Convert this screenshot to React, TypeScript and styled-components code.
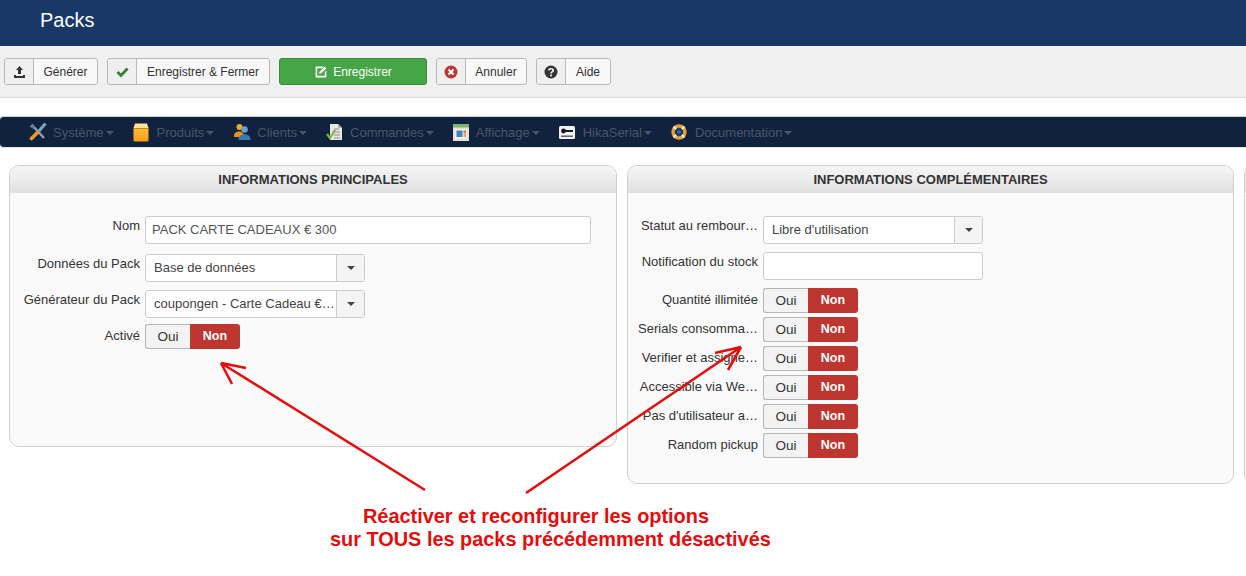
import React from 'react';
import styled, { createGlobalStyle } from 'styled-components';

const GlobalStyle = createGlobalStyle`
  html, body {
    margin: 0;
    padding: 0;
    background: #fff;
    font-family: "Liberation Sans", Arial, sans-serif;
    overflow: hidden;
  }
`;

const UploadIcon = () => (
  <svg width="13" height="13" viewBox="0 0 13 13">
    <path d="M6.5 1 L10 5 H8 V9 H5 V5 H3 Z M1 10 H3 V11 H10 V10 H12 V13 H1 Z" fill="#333" />
  </svg>
);

const CheckIcon = () => (
  <svg width="13" height="13" viewBox="0 0 13 13">
    <path d="M1.5 7 L5 10.5 L11.5 3.5" fill="none" stroke="#378137" strokeWidth="2.8" />
  </svg>
);

const EditIcon = () => (
  <svg width="14" height="14" viewBox="0 0 13 13">
    <path d="M1.5 1.5 H9 L7.5 3 H3 V10 H10 V6.5 L11.5 5 V11.5 H1.5 Z" fill="#fff" />
    <path d="M5 6.5 L10 1.5 L11.5 3 L6.5 8 L4.8 8.2 Z" fill="#fff" />
  </svg>
);

const CancelIcon = () => (
  <svg width="14" height="14" viewBox="0 0 14 14">
    <circle cx="7" cy="7" r="6.5" fill="#bd362f" />
    <path d="M4.5 4.5 L9.5 9.5 M9.5 4.5 L4.5 9.5" stroke="#fff" strokeWidth="2" />
  </svg>
);

const HelpIcon = () => (
  <svg width="14" height="14" viewBox="0 0 14 14">
    <circle cx="7" cy="7" r="6.5" fill="#333" />
    <path d="M4.8 5.4 C5 3.2 9.2 3.2 9.2 5.4 C9.2 7 7 6.8 7 8.4" fill="none" stroke="#f0f0f0" strokeWidth="1.7" />
    <rect x="6.1" y="9.5" width="1.8" height="1.8" fill="#f0f0f0" />
  </svg>
);

const ToolsIcon = () => (
  <svg width="18" height="18" viewBox="0 0 18 18">
    <path d="M3 2 L15 15" stroke="#8fa3b5" strokeWidth="2.4" />
    <path d="M0.5 3.5 L3.5 0.5 L6 4.5 L4.5 6 Z" fill="#5c7c98" />
    <path d="M16.5 0.5 L10 8" stroke="#7ba8c8" strokeWidth="3" />
    <path d="M8.5 9.5 L2.5 15.5" stroke="#e39a2a" strokeWidth="3.8" strokeLinecap="round" />
  </svg>
);

const BoxIcon = () => (
  <svg width="16" height="19" viewBox="0 0 16 19">
    <defs>
      <linearGradient id="boxFront" x1="0" y1="0" x2="0" y2="1">
        <stop offset="0" stopColor="#fcbf3e" />
        <stop offset="1" stopColor="#f59c14" />
      </linearGradient>
    </defs>
    <rect x="0.5" y="5" width="15" height="13.5" rx="1" fill="url(#boxFront)" />
    <path d="M2 0.5 H14 L15.5 5 H0.5 Z" fill="#fde39a" />
    <rect x="0.5" y="5" width="15" height="1" fill="#c8861a" />
  </svg>
);

const UsersIcon = () => (
  <svg width="18" height="18" viewBox="0 0 18 18">
    <circle cx="6.5" cy="4" r="3" fill="#f5a623" />
    <path d="M1 13 C1 7 11 7 11 13 V14 H1 Z" fill="#e8941a" />
    <circle cx="11.5" cy="6.5" r="3.3" fill="#6aa0cf" />
    <path d="M5.5 16 C5.5 9.5 17.5 9.5 17.5 16 V17 H5.5 Z" fill="#3f78b0" />
  </svg>
);

const OrderIcon = () => (
  <svg width="18" height="18" viewBox="0 0 18 18">
    <path d="M4 1 H12 L16 5 V17 H4 Z" fill="#e8e8e4" />
    <path d="M12 1 L16 5 H12 Z" fill="#b5b5ad" />
    <path d="M8 6 H13 M8 9 H14 M8 12 H14 M8 15 H14" stroke="#8d8d88" strokeWidth="1" />
    <path d="M1 11 L4 15 L9 7" fill="none" stroke="#79b63c" strokeWidth="2.2" />
  </svg>
);

const DisplayIcon = () => (
  <svg width="16" height="17" viewBox="0 0 16 17">
    <rect x="0" y="0" width="16" height="17" fill="#e6dfd8" />
    <rect x="0" y="0" width="16" height="3.5" fill="#7cb66a" />
    <rect x="2" y="5" width="12" height="10" fill="#f4efe9" />
    <rect x="3.5" y="6.5" width="6" height="6.5" fill="#3f86bd" />
    <rect x="10.5" y="6.5" width="2.5" height="3" fill="#d9705c" />
    <rect x="10.5" y="10" width="2.5" height="3" fill="#d6b24f" />
  </svg>
);

const SerialIcon = () => (
  <svg width="16" height="13" viewBox="0 0 16 13">
    <rect x="0" y="0" width="16" height="13" rx="1.5" fill="#f2f2f2" />
    <circle cx="4.5" cy="5" r="2.4" fill="#1a1a1a" />
    <rect x="5" y="4" width="9" height="2" fill="#1a1a1a" />
    <rect x="2" y="9.5" width="12" height="1.4" fill="#555" />
  </svg>
);

const DocIcon = () => (
  <svg width="16" height="16" viewBox="0 0 16 16">
    <circle cx="8" cy="8" r="6" fill="#1e3a66" stroke="#e8a030" strokeWidth="3.4" />
    <path d="M2.5 2.5 L5 5 M13.5 2.5 L11 5 M2.5 13.5 L5 11 M13.5 13.5 L11 11" stroke="#f3f3f3" strokeWidth="2.2" />
    <circle cx="8" cy="8" r="1.8" fill="#3d6ea8" />
  </svg>
);

const TitleBar = styled.header`
  height: 46px;
  background: #1a3867;
  box-sizing: border-box;
  padding: 9px 0 0 40px;
`;

const PageTitle = styled.h1`
  margin: 0;
  font-size: 20px;
  line-height: 23px;
  font-weight: normal;
  color: #fff;
`;

const Toolbar = styled.div`
  height: 52px;
  box-sizing: border-box;
  background: #f0f0f0;
  border-bottom: 1px solid #dcdcdc;
  padding: 12px 4px 0;
  display: flex;
  gap: 9px;
  align-items: flex-start;
`;

const ToolButton = styled.div<{ $width: number }>`
  width: ${(p) => p.$width}px;
  height: 27px;
  box-sizing: border-box;
  display: flex;
  background: #f8f8f8;
  border: 1px solid #b9b9b9;
  border-radius: 3px;
  font-size: 12px;
  color: #333;
`;

const ToolIcon = styled.span`
  width: 28px;
  flex: none;
  display: flex;
  align-items: center;
  justify-content: center;
  background: #efefef;
  border-right: 1px solid #b9b9b9;
  border-radius: 3px 0 0 3px;
`;

const ToolLabel = styled.span`
  flex: 1;
  display: flex;
  align-items: center;
  justify-content: center;
`;

const SaveButton = styled.div`
  width: 148px;
  height: 27px;
  box-sizing: border-box;
  display: flex;
  align-items: center;
  justify-content: center;
  gap: 5px;
  background: #46a546;
  border: 1px solid #3a8a3a;
  border-radius: 3px;
  font-size: 12px;
  color: #fff;
`;

const NavBar = styled.nav`
  margin-top: 18px;
  height: 32px;
  box-sizing: border-box;
  background: #10223e;
  border-top: 1px solid #c9ced6;
  border-bottom: 1px solid #e4e8ee;
  border-radius: 4px 0 0 4px;
  padding-left: 29px;
  display: flex;
  align-items: center;
`;

const NavItem = styled.div<{ $gap: number }>`
  display: flex;
  align-items: center;
  margin-right: ${(p) => p.$gap}px;
  font-size: 13px;
  color: #4a5568;
`;

const NavIcon = styled.span<{ $width: number }>`
  width: ${(p) => p.$width}px;
  flex: none;
  display: flex;
  align-items: center;
`;

const Caret = styled.i`
  width: 0;
  height: 0;
  margin-left: 2px;
  margin-top: 2px;
  border-left: 4px solid transparent;
  border-right: 4px solid transparent;
  border-top: 4px solid #4a5568;
`;

const Panels = styled.main`
  margin-top: 17px;
  padding-left: 9px;
  display: flex;
  align-items: flex-start;
  gap: 10px;
`;

const Panel = styled.section<{ $height: number; $width: number }>`
  width: ${(p) => p.$width}px;
  height: ${(p) => p.$height}px;
  flex: none;
  box-sizing: border-box;
  background: #fafafa;
  border: 1px solid #d0d0d0;
  border-radius: 10px;
  overflow: hidden;
`;

const EdgePanel = styled.section`
  width: 12px;
  height: 319px;
  flex: none;
  box-sizing: border-box;
  background: #fafafa;
  border: 1px solid #d0d0d0;
  border-right: none;
  border-radius: 10px 0 0 10px;
  overflow: hidden;
`;

const PanelHead = styled.div`
  height: 27px;
  background: linear-gradient(#f6f6f6, #e0e0e0);
  text-align: center;
  font-size: 13px;
  line-height: 27px;
  font-weight: bold;
  color: #333;
`;

const PanelBody = styled.div`
  padding: 23px 0 0;
  display: flex;
  flex-direction: column;
`;

const Row = styled.div<{ $after: number }>`
  display: flex;
  margin-bottom: ${(p) => p.$after}px;
`;

const FieldLabel = styled.label<{ $drop?: number }>`
  width: 130px;
  flex: none;
  box-sizing: border-box;
  margin-right: 5px;
  padding-top: ${(p) => p.$drop ?? 0}px;
  text-align: right;
  font-size: 13px;
  line-height: 20px;
  color: #333;
  white-space: nowrap;
`;

const TextBox = styled.div<{ $width: number }>`
  width: ${(p) => p.$width}px;
  height: 28px;
  box-sizing: border-box;
  padding-left: 6px;
  background: #fff;
  border: 1px solid #ccc;
  border-radius: 3px;
  font-size: 13px;
  line-height: 25px;
  color: #555;
`;

const SelectBox = styled.div`
  width: 220px;
  height: 28px;
  box-sizing: border-box;
  display: flex;
  background: #fff;
  border: 1px solid #ccc;
  border-radius: 3px;
  font-size: 13px;
  line-height: 25px;
  color: #444;
`;

const SelectValue = styled.span`
  flex: 1;
  padding-left: 8px;
  white-space: nowrap;
  overflow: hidden;
`;

const SelectArrow = styled.span`
  width: 28px;
  flex: none;
  box-sizing: border-box;
  display: flex;
  align-items: center;
  justify-content: center;
  background: #f4f4f4;
  border-left: 1px solid #ccc;
  border-radius: 0 3px 3px 0;

  &::after {
    content: '';
    border-left: 4px solid transparent;
    border-right: 4px solid transparent;
    border-top: 4px solid #444;
  }
`;

const Toggle = styled.div`
  display: flex;
  width: 95px;
  height: 25px;
  line-height: 24px;
  text-align: center;
`;

const ToggleOff = styled.span`
  width: 45px;
  box-sizing: border-box;
  background: #f3f3f3;
  border: 1px solid #b5b5b5;
  border-right: none;
  border-radius: 3px 0 0 3px;
  color: #333;
  font-size: 13.5px;
`;

const ToggleOn = styled.span`
  width: 50px;
  background: #bd362f;
  border-radius: 0 3px 3px 0;
  color: #fff;
  font-weight: bold;
  font-size: 12.5px;
  line-height: 25px;
`;

const Arrows = styled.svg`
  position: absolute;
  left: 0;
  top: 0;
  pointer-events: none;
`;

const Notice = styled.div`
  position: absolute;
  left: 330px;
  top: 505px;
  font-size: 19.9px;
  line-height: 23px;
  font-weight: bold;
  color: #e60c0c;
  white-space: nowrap;
`;

const NoticeLine = styled.div<{ $indent: number }>`
  padding-left: ${(p) => p.$indent}px;
`;

const YesNo = () => (
  <Toggle>
    <ToggleOff>Oui</ToggleOff>
    <ToggleOn>Non</ToggleOn>
  </Toggle>
);

const rightToggles = [
  'Quantité illimitée',
  'Serials consomma…',
  'Verifier et assigne…',
  'Accessible via We…',
  "Pas d'utilisateur a…",
  'Random pickup',
];

const navItems = [
  { label: 'Système', icon: <ToolsIcon />, iconWidth: 24, gap: 19 },
  { label: 'Produits', icon: <BoxIcon />, iconWidth: 24, gap: 19 },
  { label: 'Clients', icon: <UsersIcon />, iconWidth: 24, gap: 19 },
  { label: 'Commandes', icon: <OrderIcon />, iconWidth: 24, gap: 19 },
  { label: 'Affichage', icon: <DisplayIcon />, iconWidth: 23, gap: 19 },
  { label: 'HikaSerial', icon: <SerialIcon />, iconWidth: 24, gap: 19 },
  { label: 'Documentation', icon: <DocIcon />, iconWidth: 24, gap: 0 },
];

const App: React.FC = () => {
  return (
    <>
      <GlobalStyle />
      <TitleBar>
        <PageTitle>Packs</PageTitle>
      </TitleBar>
      <Toolbar>
        <ToolButton $width={94}>
          <ToolIcon><UploadIcon /></ToolIcon>
          <ToolLabel>Générer</ToolLabel>
        </ToolButton>
        <ToolButton $width={163}>
          <ToolIcon><CheckIcon /></ToolIcon>
          <ToolLabel>Enregistrer &amp; Fermer</ToolLabel>
        </ToolButton>
        <SaveButton>
          <EditIcon />
          Enregistrer
        </SaveButton>
        <ToolButton $width={91}>
          <ToolIcon><CancelIcon /></ToolIcon>
          <ToolLabel>Annuler</ToolLabel>
        </ToolButton>
        <ToolButton $width={75}>
          <ToolIcon><HelpIcon /></ToolIcon>
          <ToolLabel>Aide</ToolLabel>
        </ToolButton>
      </Toolbar>
      <NavBar>
        {navItems.map((item) => (
          <NavItem key={item.label} $gap={item.gap}>
            <NavIcon $width={item.iconWidth}>{item.icon}</NavIcon>
            {item.label}
            <Caret />
          </NavItem>
        ))}
      </NavBar>
      <Panels>
        <Panel $width={608} $height={282}>
          <PanelHead>INFORMATIONS PRINCIPALES</PanelHead>
          <PanelBody>
            <Row $after={10}>
              <FieldLabel>Nom</FieldLabel>
              <TextBox $width={446}>PACK CARTE CADEAUX € 300</TextBox>
            </Row>
            <Row $after={8}>
              <FieldLabel>Données du Pack</FieldLabel>
              <SelectBox>
                <SelectValue>Base de données</SelectValue>
                <SelectArrow />
              </SelectBox>
            </Row>
            <Row $after={6}>
              <FieldLabel>Générateur du Pack</FieldLabel>
              <SelectBox>
                <SelectValue>coupongen - Carte Cadeau €…</SelectValue>
                <SelectArrow />
              </SelectBox>
            </Row>
            <Row $after={0}>
              <FieldLabel $drop={2}>Activé</FieldLabel>
              <YesNo />
            </Row>
          </PanelBody>
        </Panel>
        <Panel $width={607} $height={319}>
          <PanelHead>INFORMATIONS COMPLÉMENTAIRES</PanelHead>
          <PanelBody>
            <Row $after={8}>
              <FieldLabel>Statut au rembour…</FieldLabel>
              <SelectBox>
                <SelectValue>Libre d'utilisation</SelectValue>
                <SelectArrow />
              </SelectBox>
            </Row>
            <Row $after={8}>
              <FieldLabel>Notification du stock</FieldLabel>
              <TextBox $width={220} />
            </Row>
            {rightToggles.map((label) => (
              <Row key={label} $after={4}>
                <FieldLabel $drop={2}>{label}</FieldLabel>
                <YesNo />
              </Row>
            ))}
          </PanelBody>
        </Panel>
        <EdgePanel>
          <PanelHead />
        </EdgePanel>
      </Panels>
      <Arrows width="1246" height="576" viewBox="0 0 1246 576">
        <g fill="none" stroke="#e60c0c" strokeWidth="2.6">
          <path d="M425 490 L221 363 M221 363 L246 368 M221 363 L232 384" />
          <path d="M526 493 L741 347 M741 347 L715 353 M741 347 L728 370" />
        </g>
      </Arrows>
      <Notice>
        <NoticeLine $indent={33}>Réactiver et reconfigurer les options</NoticeLine>
        <NoticeLine $indent={0}>sur TOUS les packs précédemment désactivés</NoticeLine>
      </Notice>
    </>
  );
};

export default App;
